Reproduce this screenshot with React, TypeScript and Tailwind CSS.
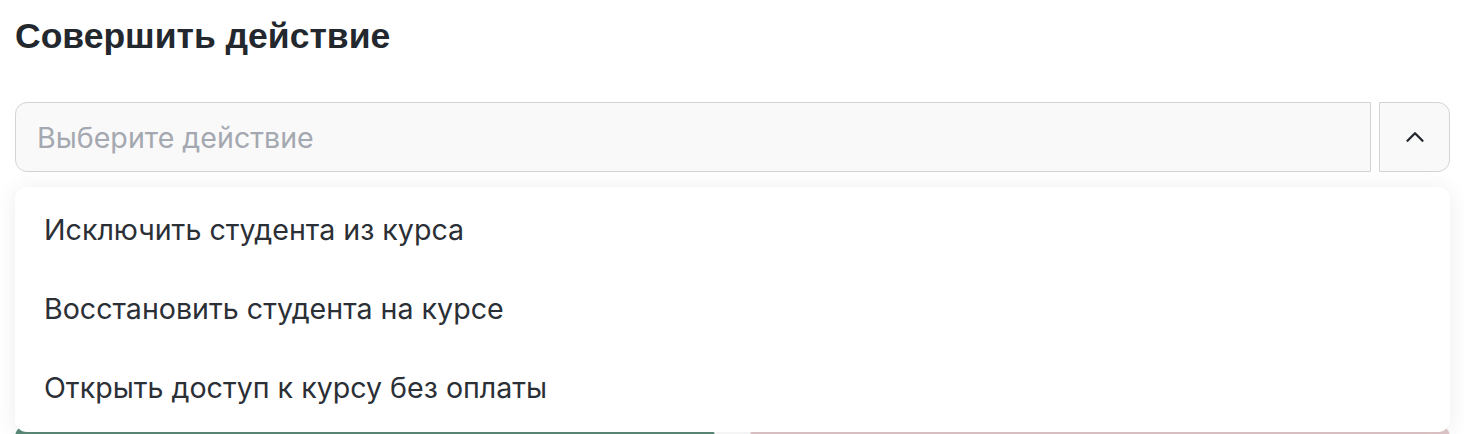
import { ChevronUp } from "lucide-react"

const actions = [
  "Исключить студента из курса",
  "Восстановить студента на курсе",
  "Открыть доступ к курсу без оплаты",
]

export default function App() {
  return (
    <div className="h-[434px] overflow-hidden bg-white pt-[14px] pr-[14px] pl-[15px] font-['Inter',sans-serif]">
      <h2 className="font-['Liberation_Sans',Arial,sans-serif] text-[35.5px] font-bold leading-[44px] text-[#23272e]">
        Совершить действие
      </h2>

      <div className="relative mt-[44px]">
        <div className="flex gap-[8px]">
          <div className="flex h-[70px] flex-1 items-center rounded-l-[12px] border border-[#d4d4d4] bg-[#f9f9f9] px-[21px] pt-[2px] text-[28.6px] text-[#a4a8b0]">
            Выберите действие
          </div>
          <button className="flex h-[70px] w-[71px] items-center justify-center rounded-r-[12px] border border-[#d4d4d4] bg-[#f9f9f9] text-[#23272e]">
            <ChevronUp className="h-[30px] w-[30px]" strokeWidth={1.9} />
          </button>
        </div>

        {/* выпадающий список */}
        <div className="absolute top-[85px] right-0 left-0 z-10 flex h-[245px] flex-col justify-center rounded-[12px] bg-white pt-[4px] pb-[4px] shadow-[0_2px_24px_rgba(0,0,0,0.08)]">
          {actions.map((a) => (
            <div key={a} className="flex h-[79px] items-center px-[29px] text-[28.6px] text-[#2b2f36]">
              {a}
            </div>
          ))}
        </div>

        <div className="mt-[253px] flex gap-[35px]">
          <button aria-label="Сохранить" className="h-14 flex-1 rounded-[12px] bg-[#5b8a78]" />
          <button aria-label="Отмена" className="h-14 flex-1 rounded-[12px] bg-[#e0c6c8]" />
        </div>
      </div>
    </div>
  )
}
